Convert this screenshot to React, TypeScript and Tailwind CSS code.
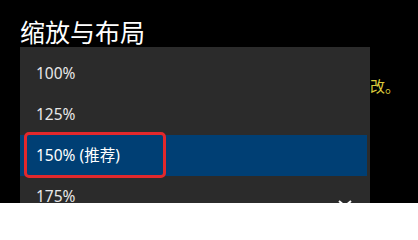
import React from 'react';

const options = ['100%', '125%', '150% (推荐)', '175%'];
const selected = 2;

export default function App() {
  return (
    <div
      className="relative h-[203px] w-[418px] overflow-hidden bg-black"
      style={{ fontFamily: '"Noto Sans", "Noto Sans CJK SC", sans-serif' }}
    >
      <div className="pl-5 pt-[17px]">
        <p className="h-[30px] text-[25px] leading-[30px] text-white">缩放与布局</p>
      </div>

      <div className="flex flex-row items-start">
        <div className="ml-5 w-[350px] bg-[#2b2b2b] pt-[6px] pr-[3px]">
          {options.map((label, i) => (
            <div
              key={label}
              className={`relative flex h-[41px] items-center pl-4 text-[15.5px] ${
                i === selected ? 'bg-[#003f74] text-white' : 'text-[#e8e8e8]'
              }`}
            >
              {label}
              {i === selected && (
                <div className="absolute top-[-3px] left-[4px] h-[46px] w-[142px] rounded-[5px] border-[3px] border-[#e3282b]" />
              )}
            </div>
          ))}
        </div>
        <p className="mt-[29px] text-[15px] leading-[20px] text-[#dccb3c]">改。</p>
      </div>

      <svg
        className="absolute top-[200px] left-[338px]"
        width="14"
        height="8"
        viewBox="0 0 14 8"
      >
        <path d="M1 1 L7 6 L13 1" stroke="#ffffff" strokeWidth="2" fill="none" />
      </svg>
    </div>
  );
}
